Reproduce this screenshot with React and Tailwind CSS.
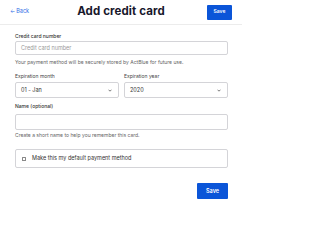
import React from 'react'

function Chevron() {
  return (
    <svg width="4" height="3" viewBox="0 0 4 3" className="shrink-0">
      <path d="M0.5 0.7 L2 2.2 L3.5 0.7" fill="none" stroke="#444" strokeWidth="0.7" />
    </svg>
  )
}

function Select({ value }) {
  return (
    <div className="h-[16px] rounded-[2px] border border-[#d4d4d8] bg-white flex items-center justify-between pl-[5px] pr-[6px] text-[5.5px] text-[#333]">
      <span>{value}</span>
      <Chevron />
    </div>
  )
}

export default function App() {
  return (
    <div className="w-[242px] h-[208px] bg-white overflow-hidden" style={{ fontFamily: 'Inter, "Noto Sans", sans-serif' }}>
      <header className="h-[25px] border-b border-[#ececec] grid grid-cols-[1fr_auto_1fr] items-center px-[10px]">
        <a className="text-[5.5px] text-[#2f6ee6] flex items-center gap-[1px] leading-none">
          <span>←</span>
          <span>Back</span>
        </a>
        <h1 className="text-[11.5px] font-bold text-[#17172b] leading-none tracking-[0.1px]">Add credit card</h1>
        <div className="flex justify-end">
          <button className="h-[15px] w-[25px] rounded-[1px] bg-[#0b55d8] text-white text-[5px] font-semibold">Save</button>
        </div>
      </header>

      <div className="pl-[15px] pr-[14px]">
        <div className="mt-[8px] text-[5px] leading-[7px] font-medium text-[#333]">Credit card number</div>
        <div className="mt-[1px] h-[14px] rounded-[2px] border border-[#d4d4d8] flex items-center pl-[5px] text-[5.5px] text-[#9a9a9a]">
          Credit card number
        </div>
        <p className="mt-[4px] text-[5px] leading-[7px] text-[#666]">
          Your payment method will be securely stored by ActBlue for future use.
        </p>

        <div className="mt-[7px] grid grid-cols-2 gap-x-[5px]">
          <div>
            <div className="text-[5px] leading-[7px] text-[#444]">Expiration month</div>
            <div className="mt-[2px]"><Select value="01 - Jan" /></div>
          </div>
          <div>
            <div className="text-[5px] leading-[7px] text-[#444]">Expiration year</div>
            <div className="mt-[2px]"><Select value="2020" /></div>
          </div>
        </div>

        <div className="mt-[5px] text-[5px] leading-[7px] font-medium text-[#333]">Name (optional)</div>
        <div className="mt-[4px] h-[16px] rounded-[2px] border border-[#d4d4d8]" />
        <p className="mt-[2px] text-[5px] leading-[7px] text-[#666]">
          Create a short name to help you remember this card.
        </p>

        <label className="mt-[10px] h-[19px] rounded-[2px] border border-[#d4d4d8] flex items-center pl-[6px] gap-[6px] text-[5.5px] text-[#333]">
          <span className="w-[4px] h-[4px] border border-[#888] rounded-[0.5px]" />
          <span>Make this my default payment method</span>
        </label>

        <div className="mt-[15px] flex justify-end">
          <button className="h-[16px] w-[31px] rounded-[1px] bg-[#0b55d8] text-white text-[5.5px] font-semibold">Save</button>
        </div>
      </div>
    </div>
  )
}
